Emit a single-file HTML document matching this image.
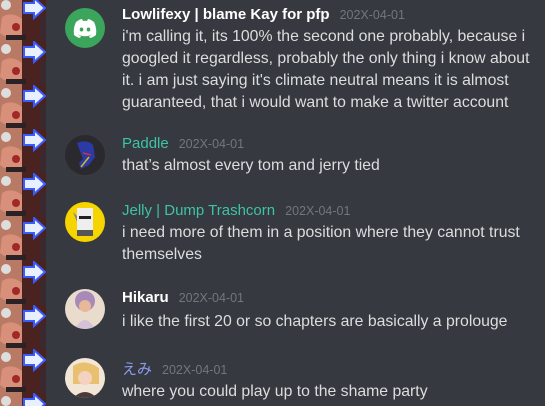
<!DOCTYPE html>
<html><head><meta charset="utf-8"><style>
body{margin:0;width:545px;height:406px;background:#36393f;overflow:hidden;position:relative;font-family:"Liberation Sans","Noto Sans CJK JP",sans-serif;}
.strip{position:absolute;left:0;top:0;width:46px;height:406px}
.av{position:absolute;left:65px;width:40px;height:40px;border-radius:50%;overflow:hidden}
.n{position:absolute;left:122px;font-size:15px;white-space:nowrap}
.n span{font-size:12.5px;color:#72767d;margin-left:10px;font-weight:normal}
.t{position:absolute;left:122px;font-size:15.8px;color:#dcddde;line-height:22px;white-space:nowrap}
</style></head><body>
<svg class="strip" width="46" height="406">
<defs><pattern id="p" width="46" height="44" patternUnits="userSpaceOnUse" y="-3">
<rect width="46" height="44" fill="#4a2220"/>
<rect x="0" y="0" width="22" height="44" fill="#b87a64"/>
<circle cx="6" cy="8" r="5" fill="#ddd"/>
<path d="M2 20 Q12 14 22 22 L22 40 Q10 44 0 36Z" fill="#d8907a"/>
<circle cx="16" cy="30" r="4" fill="#a02828"/>
<rect x="6" y="38" width="20" height="5" fill="#2a2224"/>
<path d="M24 6 L34 6 L34 1 L45 11 L34 21 L34 16 L24 16Z" fill="#e8f0ff" stroke="#3a5bff" stroke-width="2"/>
<rect x="40" y="20" width="6" height="24" fill="#3a2a30"/>
</pattern></defs>
<rect width="46" height="406" fill="url(#p)"/>
</svg>

<div class="av" style="top:8px;background:#3ba55c">
<svg width="40" height="40" viewBox="0 0 40 40"><path d="M11 14 Q15 11 17 11 L18 13 Q20 12.6 22 13 L23 11 Q25 11 29 14 Q32 20 31 27 Q28 29.5 25 30 L24 28 Q26 27.5 27 26.5 Q20 30 13 26.5 Q14 27.5 16 28 L15 30 Q12 29.5 9 27 Q8 20 11 14Z" fill="#fff"/><ellipse cx="16.5" cy="21.5" rx="1.8" ry="2" fill="#3ba55c"/><ellipse cx="23.5" cy="21.5" rx="1.8" ry="2" fill="#3ba55c"/></svg></div>
<div class="n" style="top:6px;color:#fff;font-weight:bold">Lowlifexy | blame Kay for pfp<span>202X-04-01</span></div>
<div class="t" style="top:26px">i'm calling it, its 100% the second one probably, because i<br>googled it regardless, probably the only thing i know about<br>it. i am just saying it's climate neutral means it is almost<br>guaranteed, that i would want to make a twitter account</div>

<div class="av" style="top:135px;background:#2a2a2e"><svg width="40" height="40"><path d="M12 8 Q22 4 28 10 L30 22 L24 30 L16 34 L14 28 L18 24 Z" fill="#2c3aa8"/><path d="M18 18 L26 20" stroke="#c33" stroke-width="1.5"/><path d="M16 32 L24 22" stroke="#d4b820" stroke-width="1.5"/></svg></div>
<div class="n" style="top:135px;color:#3cc4a4">Paddle<span>202X-04-01</span></div>
<div class="t" style="top:155px">that’s almost every tom and jerry tied</div>

<div class="av" style="top:202px;background:#f5d400"><svg width="40" height="40"><rect x="12" y="6" width="16" height="26" fill="#eee"/><rect x="14" y="14" width="12" height="3" fill="#222"/><rect x="12" y="28" width="16" height="6" fill="#555"/><path d="M8 10 L12 14 L12 20Z" fill="#888"/></svg></div>
<div class="n" style="top:202px;color:#3cc4a4">Jelly | Dump Trashcorn<span>202X-04-01</span></div>
<div class="t" style="top:222px">i need more of them in a position where they cannot trust<br>themselves</div>

<div class="av" style="top:289px;background:#e9dccd"><svg width="40" height="40"><circle cx="20" cy="12" r="10" fill="#a88ab8"/><circle cx="20" cy="17" r="6" fill="#e8b898"/><path d="M10 40 Q20 22 30 40Z" fill="#d6c2d8"/></svg></div>
<div class="n" style="top:289px;color:#fff;font-weight:bold">Hikaru<span>202X-04-01</span></div>
<div class="t" style="top:311px">i like the first 20 or so chapters are basically a prolouge</div>

<div class="av" style="top:358px;background:#f2e6d6"><svg width="40" height="40"><path d="M8 8 Q20 0 34 10 L34 26 L8 26Z" fill="#e8c070"/><circle cx="20" cy="20" r="7" fill="#f4d2c0"/><path d="M8 40 Q20 28 32 40Z" fill="#4a3a3a"/></svg></div>
<div class="n" style="top:358px;color:#8a9cf0">えみ<span>202X-04-01</span></div>
<div class="t" style="top:381px">where you could play up to the shame party</div>
</body></html>
